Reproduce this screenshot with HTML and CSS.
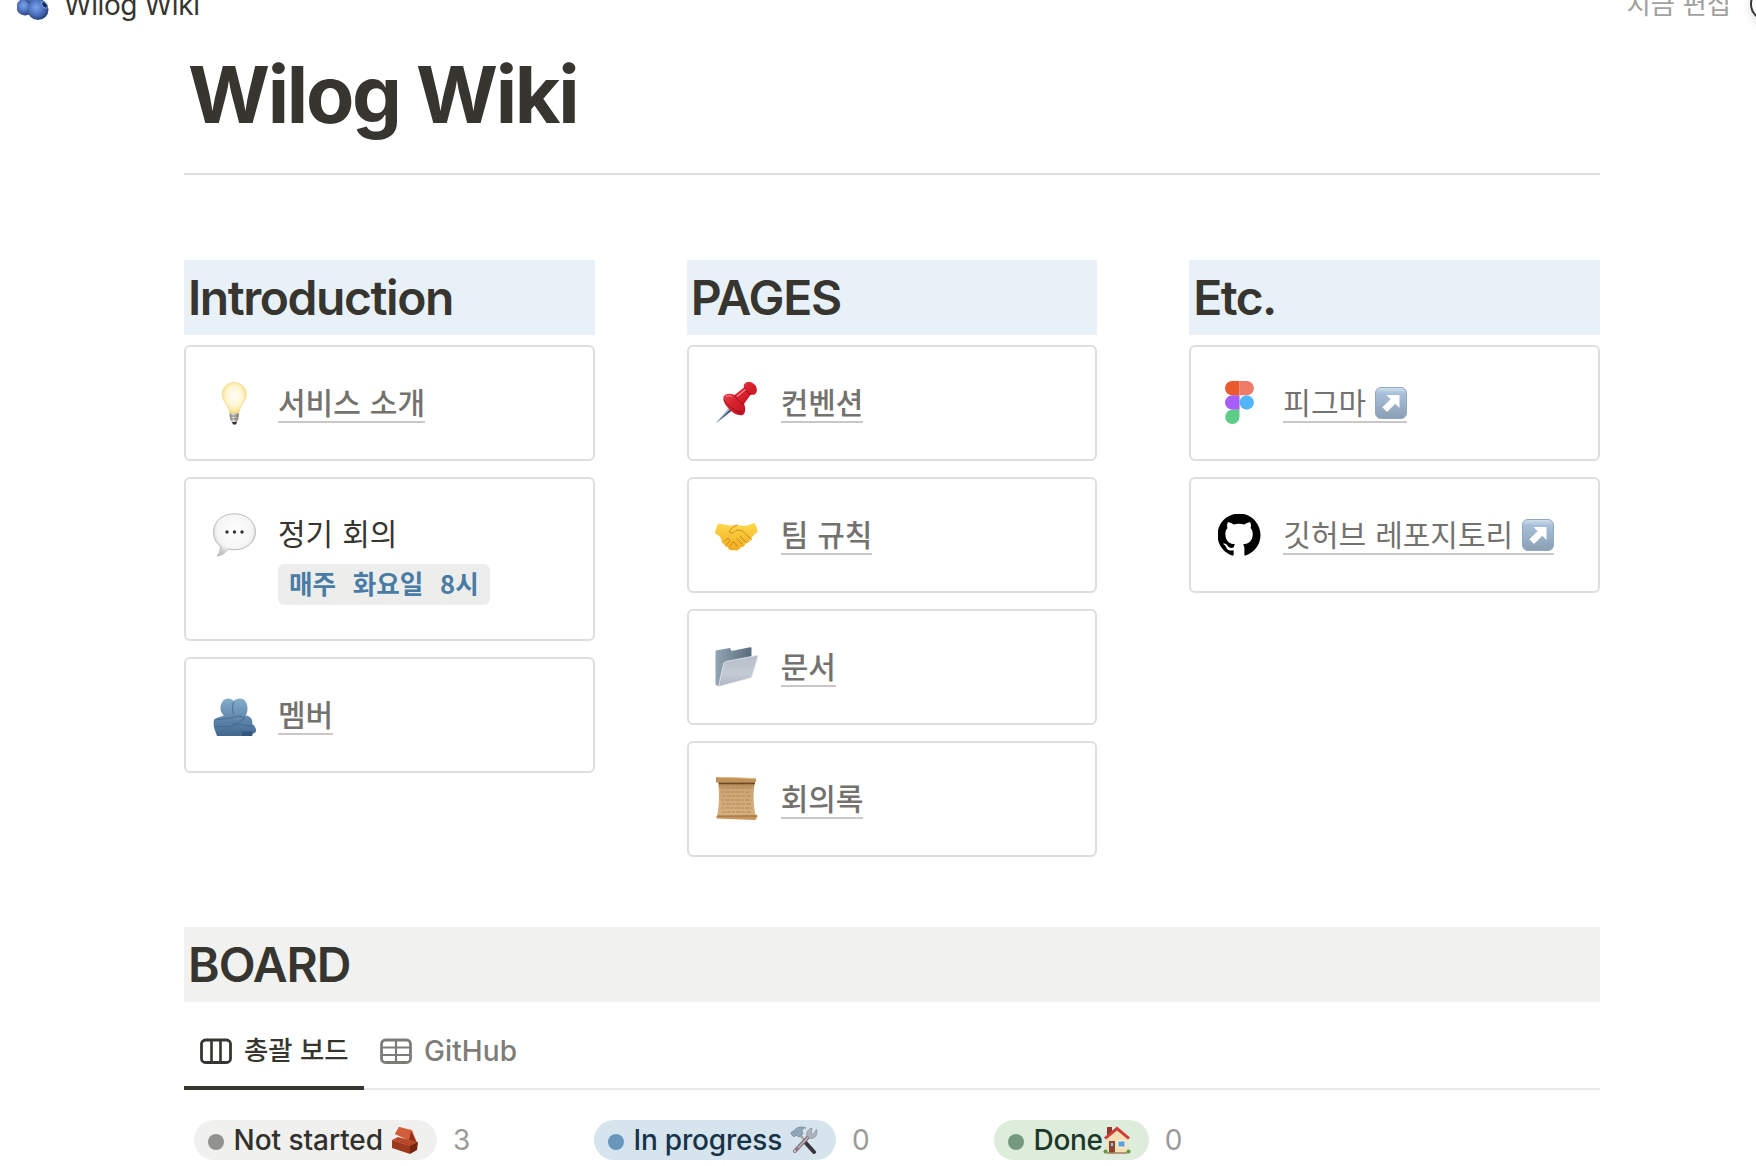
FILE: index.html
```
<!DOCTYPE html>
<html lang="ko">
<head>
<meta charset="utf-8">
<title>Wilog Wiki</title>
<link rel="stylesheet" href="styles.css">
</head>
<body>
<svg class="defs" width="0" height="0" aria-hidden="true">
  <defs>
    <radialGradient id="berry" cx=".42" cy=".4" r=".65"><stop offset="0" stop-color="#7ba3ea"/><stop offset=".55" stop-color="#4d72bd"/><stop offset="1" stop-color="#22376f"/></radialGradient>
    <radialGradient id="glass" cx=".5" cy=".45" r=".55"><stop offset="0" stop-color="#fffef8"/><stop offset=".6" stop-color="#fff6d2"/><stop offset="1" stop-color="#f6dc86"/></radialGradient>
    <linearGradient id="screw" x1="0" x2="1"><stop offset="0" stop-color="#8b8984"/><stop offset=".4" stop-color="#e2e0da"/><stop offset="1" stop-color="#77746e"/></linearGradient>
    <radialGradient id="bubble" cx=".5" cy=".4" r=".6"><stop offset="0" stop-color="#fff"/><stop offset=".7" stop-color="#f5f5f5"/><stop offset="1" stop-color="#c4c4c4"/></radialGradient>
    <linearGradient id="hug" x1="0" y1="0" x2="0" y2="1"><stop offset="0" stop-color="#84aecb"/><stop offset="1" stop-color="#41678f"/></linearGradient>
    <linearGradient id="pin" x1="0" y1="0" x2="1" y2="1"><stop offset="0" stop-color="#f0505a"/><stop offset=".5" stop-color="#d81f2c"/><stop offset="1" stop-color="#a30f1c"/></linearGradient>
    <linearGradient id="hand" x1="0" y1="0" x2="0" y2="1"><stop offset="0" stop-color="#ffd84a"/><stop offset="1" stop-color="#f0ac22"/></linearGradient>
    <linearGradient id="folderBack" x1="0" y1="0" x2="1" y2="0"><stop offset="0" stop-color="#94a5b2"/><stop offset="1" stop-color="#566b7b"/></linearGradient>
    <linearGradient id="folderFront" x1="0" y1="0" x2="0" y2="1"><stop offset="0" stop-color="#b5bdc9"/><stop offset=".6" stop-color="#c5cbd5"/><stop offset="1" stop-color="#aab4c2"/></linearGradient>
    <linearGradient id="paper" x1="0" y1="0" x2="0" y2="1"><stop offset="0" stop-color="#a57b4a"/><stop offset=".25" stop-color="#cda673"/><stop offset="1" stop-color="#d6b07e"/></linearGradient>
    <linearGradient id="key" x1="0" y1="0" x2="0" y2="1"><stop offset="0" stop-color="#d3e1ec"/><stop offset=".2" stop-color="#a6bfd7"/><stop offset="1" stop-color="#8b9fb4"/></linearGradient>
    <symbol id="arrow-key" viewBox="0 0 32 32">
      <rect x=".5" y=".5" width="31" height="31" rx="5.500" fill="url(#key)" stroke="#91a9c0"/>
      <path d="M11.500 8h13v13l-4.200-4.200-8.300 8.200-4.700-4.700 8.300-8.100z" fill="#fff"/>
    </symbol>
  </defs>
</svg>

<header class="topbar">
  <div class="crumb">
    <svg class="crumb-icon" viewBox="0 0 32 32">
      <circle cx="8" cy="18" r="8.500" fill="url(#berry)"/>
      <circle cx="15" cy="7" r="8" fill="url(#berry)"/>
      <circle cx="21" cy="20.500" r="10.500" fill="url(#berry)"/>
      <path d="M24 13l4 0 2.500 3.500-1 3-3.500-1.500z" fill="#1c2b55" stroke="#7ba0e4"/>
    </svg>
    <span class="crumb-text">Wilog Wiki</span>
  </div>
  <div class="edited"><span>지금 편집</span><i class="avatar"></i></div>
</header>

<main class="page">
  <h1 class="title">Wilog Wiki</h1>
  <hr class="rule">

  <div class="columns">
    <section class="column">
      <h2 class="heading blue intro">Introduction</h2>
      <div class="card">
        <svg class="icon" viewBox="0 0 44 44">
          <path d="M17.500 32h9.500l-.8 6.500-2 3.500h-4l-2-3.500z" fill="url(#screw)"/>
          <path d="M17.700 35h8.800M18 38h8" stroke="#73706a" stroke-width=".8"/>
          <path d="M20 41h5l-1 2.500h-3z" fill="#333"/>
          <path d="M22.300 1.500c7 0 12 5 12 12 0 7-6.500 10-7.300 18.500h-9.500c-.8-8.500-7.300-11.500-7.300-18.500 0-7 5-12 12.100-12z" fill="url(#glass)" stroke="#f1d98d" stroke-width=".8"/>
        </svg>
        <div class="label"><a class="link">서비스 소개</a></div>
      </div>
      <div class="card meeting">
        <svg class="icon" viewBox="0 .5 44 44">
          <path d="M22.500 1.300c12 0 21 7.500 21 18s-9 18-21 18c-2.500 0-4.500-.2-6.500-.8-2.500 3.500-6 6.500-11 7 2.500-2.500 3.800-6 3.200-10C4 30.300 1.500 25.500 1.500 19.300c0-10.500 9-18 21-18z" fill="url(#bubble)" stroke="#b4b4b4" stroke-width=".9"/>
          <g fill="#333"><circle cx="15" cy="19.500" r="1.700"/><circle cx="22.500" cy="19.500" r="1.700"/><circle cx="30" cy="19.500" r="1.700"/></g>
        </svg>
        <div class="label"><span class="plain">정기 회의</span><code class="code">매주 화요일 8시</code></div>
      </div>
      <div class="card">
        <svg class="icon" viewBox="0 -2.500 44 44">
          <path d="M8.500 13c0-6 3.500-10 7.500-10 2.500 0 4.500 1 5.700 2.500C23.200 4 25.500 3 28 3c4.500 0 7.500 4 7.500 10 0 3-.8 5.500-1.800 7 5 .8 7.300 4 6.500 8.500 2.500 1.500 4 4.500 3.800 7-.4 1.500-1.500 2.300-3 2.500L40 40.500H5l-2.700-7.500c-1-4-1-8.500.5-9.500 3-2.200 7-2 9-3.500C9.800 17.500 8.500 16 8.500 13z" fill="url(#hug)"/>
          <path d="M3 24.500c8-1.500 15-1 20-3.500 5-1 8 0 10 2-4 1.500-6 6-13 5.500M2.500 31c10-.5 16 2 22-2l16 1.500M22 6c-2 4-2 9 0 13M17 38l4-2.500 4 2.500 4-2" fill="none" stroke="#3d668e" stroke-width=".8"/>
          <path d="M30 36h10v4.500H30z" fill="#31577e"/>
        </svg>
        <div class="label"><a class="link">멤버</a></div>
      </div>
    </section>

    <section class="column">
      <h2 class="heading blue pages">PAGES</h2>
      <div class="card">
        <svg class="icon" viewBox="1 .5 44 44">
          <path d="M1.500 43L17 25l3 3z" fill="#8fb4d4"/><path d="M1.500 43L18.500 27l1.500 1.500z" fill="#3e4854"/>
          <path d="M9.500 16c2-3 7-3.500 11-1.500L30 7c-1-3 1.500-6 5.500-5.500 4.500.5 8 4.500 7.300 9-.5 3.500-3.500 4.500-6 3.500L30 23.500c2 4 1.500 9-1 11-5 1-9.500-1.500-13-5-4-3.500-7.500-8.500-6.500-13.500z" fill="url(#pin)"/>
          <path d="M30.500 7c1.500 3.500 4 6 7 7M20.500 14.500c2 4 5 7.500 9.500 9.500M10 19c4 7 11 12 18 13" fill="none" stroke="#9c101b" stroke-width="1"/>
          <path d="M23 16l8.500-7M12 16c2-1 4-1 6 0" stroke="#f8888c" stroke-width="1.200" fill="none"/>
        </svg>
        <div class="label"><a class="link">컨벤션</a></div>
      </div>
      <div class="card">
        <svg class="icon" viewBox="1 1 44 44">
          <path d="M4.500 11.500l11 2c2 .4 4-.6 6-.6 4 0 8 1.300 12 .6l7-2.500c2 3 3 6 3 9-3 2-5 4-7 8-1 2.500-3 3-5 3.500-1 3-3 4-5 4-1.500 2.500-4 3.500-6.500 2.500-3.500 1-5.500-.5-6.500-3-2 0-3-1-3.500-3-2-.5-2.500-2-2.500-4-1-3.500-3-5-6.500-6.500.4-4 1.500-7.500 3.500-10z" fill="url(#hand)"/>
          <path d="M23 13c-4 1-6 4-8 7 2 2 5 1 7-1.500 3-1 6 0 8 2l7.500 7M26 24l6.500 6.500M23 27l5 5M19 29l4 5M11 29l3-3 2 3-3 3M16 34l3-4" fill="none" stroke="#cf8a15" stroke-width="1" stroke-linecap="round"/>
        </svg>
        <div class="label"><a class="link">팀 규칙</a></div>
      </div>
      <div class="card">
        <svg class="icon" viewBox="1 0 44 44">
          <path d="M1.500 7c0-1 .5-1.500 1.500-1.700L16 3l1.500 3L36 2.300c1-.2 1.500.2 1.500 1V28L4 40.500c-1.500.5-2.500-.5-2.500-2z" fill="url(#folderBack)"/>
          <path d="M9.500 19c.4-1.500 1.500-2.300 3-2.600L42.500 10.500c1-.2 1.500.3 1.300 1.300L38 31c-.3 1.200-1 1.800-2 2L4.500 41.500z" fill="url(#folderFront)" stroke="#e3e8ee" stroke-width=".8"/>
        </svg>
        <div class="label"><a class="link">문서</a></div>
      </div>
      <div class="card">
        <svg class="icon" viewBox="1 1 44 44">
          <path d="M4 5h37c-2 11-2 24 1 36H3C5.500 29 5.500 16 4 5z" fill="url(#paper)"/>
          <path d="M2 1l40 1.500V6L2 6.500z" fill="#c1915b"/><path d="M2 1l40 1.500" stroke="#e4bd8b"/>
          <path d="M5 7.500h36" stroke="#6d4a26" stroke-width="1.500"/>
          <path d="M2.500 40l39-1c1.500-1 2 0 2 1.500l-2 3.500-39-1.500z" fill="#c6955a"/><path d="M3 40h39" stroke="#8b6236" stroke-width=".8"/>
          <path d="M8 12h30M7 16h30M8 20h29M7 24h30M8 28h29M7 32h31M8 36h30" stroke="#b0875a" stroke-width=".9" stroke-dasharray="3 1 5 1"/>
        </svg>
        <div class="label"><a class="link">회의록</a></div>
      </div>
    </section>

    <section class="column">
      <h2 class="heading blue etc">Etc.</h2>
      <div class="card">
        <svg class="icon" viewBox="0 .5 44 44">
          <path d="M22.500.5v14.300h-7.300a7.150 7.150 0 0 1 0-14.300z" fill="#eb5a2c"/>
          <path d="M22.500.5h7.200a7.150 7.150 0 0 1 0 14.300h-7.200z" fill="#ee7b68"/>
          <path d="M22.500 14.800v14.400h-7.300a7.200 7.200 0 0 1 0-14.400z" fill="#a65cf6"/>
          <circle cx="29.700" cy="22" r="7.200" fill="#53b6fb"/>
          <path d="M22.500 29.200v7a7.200 7.200 0 1 1-7.300-7z" fill="#5fcd87"/>
        </svg>
        <div class="label"><a class="link thin">피그마 <svg class="key"><use href="#arrow-key"/></svg></a></div>
      </div>
      <div class="card">
        <svg class="icon gh" viewBox="0 0 16 16">
          <path d="M8 0C3.580 0 0 3.580 0 8c0 3.540 2.290 6.530 5.470 7.590.4.070.55-.17.55-.38 0-.19-.01-.82-.01-1.490-2.010.37-2.530-.49-2.690-.94-.09-.23-.48-.94-.82-1.130-.28-.15-.68-.52-.01-.53.63-.01 1.080.58 1.230.82.72 1.210 1.870.87 2.330.66.070-.52.28-.87.51-1.070-1.780-.2-3.640-.89-3.640-3.950 0-.87.31-1.590.82-2.150-.08-.2-.36-1.020.08-2.120 0 0 .67-.21 2.200.82.64-.18 1.320-.27 2-.27s1.360.09 2 .27c1.530-1.040 2.200-.82 2.200-.82.44 1.100.16 1.920.08 2.120.51.56.82 1.270.82 2.150 0 3.070-1.870 3.750-3.650 3.950.29.25.54.73.54 1.480 0 1.070-.01 1.930-.01 2.200 0 .21.15.46.55.38A8.010 8.010 0 0 0 16 8c0-4.420-3.580-8-8-8z"/>
        </svg>
        <div class="label"><a class="link thin">깃허브 레포지토리 <svg class="key"><use href="#arrow-key"/></svg></a></div>
      </div>
    </section>
  </div>

  <h2 class="heading gray board-title">BOARD</h2>

  <nav class="tabs">
    <div class="tab active">
      <svg class="tab-icon" viewBox="0 0 32 26"><rect x="1.500" y="2" width="29" height="22.500" rx="4" fill="none" stroke="currentColor" stroke-width="2.800"/><path d="M11.500 2v22M20.500 2v22" stroke="currentColor" stroke-width="2.600"/></svg>
      <span class="tab-ko">총괄 보드</span>
    </div>
    <div class="tab">
      <svg class="tab-icon" viewBox="0 0 32 26"><rect x="1.500" y="2" width="29" height="22.500" rx="4" fill="none" stroke="currentColor" stroke-width="2.800"/><path d="M2 9.500h28M2 17h28M16 2v22" stroke="currentColor" stroke-width="2.200"/></svg>
      <span class="tab-en">GitHub</span>
    </div>
  </nav>

  <div class="groups">
    <div class="group">
      <div class="pill todo"><i class="dot"></i><span>Not started</span>
        <svg class="emoji" viewBox="0 0 28 28">
          <path d="M8 1l13 3 5 13-9-3L4 8z" fill="#dc6844"/><path d="M4 8l4-7 12 4-2 9z" fill="#d25d39"/><path d="M20 5l6 12-8-3z" fill="#8f3119"/>
          <path d="M1 14l6-3 20 5-6 5z" fill="#b9482a"/><path d="M1 14l18 6v8L1 22z" fill="#a0381c"/><path d="M19 20l8-4-1 8-7 4z" fill="#742410"/>
        </svg>
      </div>
      <span class="count">3</span>
    </div>
    <div class="group">
      <div class="pill doing"><i class="dot"></i><span>In progress</span>
        <svg class="emoji" viewBox="0 0 28 28">
          <path d="M9 8l7 8" stroke="#a9a7ac" stroke-width="2.500"/><path d="M15 16l9 10" stroke="#39373b" stroke-width="4" stroke-linecap="round"/>
          <path d="M20 9L5 25" stroke="#89747c" stroke-width="4" stroke-linecap="round"/><path d="M20 9L8 22" stroke="#b9b3ba" stroke-width="1.500"/>
          <circle cx="5" cy="25" r="1" fill="#ddd"/>
          <path d="M1 8c0-2 1-3 3-3 2-4 7-5 12-3-3 0-4 1-4 3l1 3-4 3-3-2-2 2z" fill="#8fa6b8" stroke="#63788a" stroke-width=".6"/>
          <path d="M17 10c-1-4 1-7 5-8l-1 5 2 1.500 3.500-5c1.500 5-1 9-6 9z" fill="#aeb2ba" stroke="#7a7f88" stroke-width=".6"/>
        </svg>
      </div>
      <span class="count">0</span>
    </div>
    <div class="group">
      <div class="pill done"><i class="dot"></i><span>Done</span>
        <svg class="emoji" viewBox="0 0 28 28">
          <path d="M4 1h5v9H4z" fill="#8d3a34"/><path d="M4 12l10-9 10 9v15H4z" fill="#f6dfb4"/>
          <path d="M14 .5L1 11.500l2 2L14 4.500l11 9 2-2z" fill="#cf3c3c"/>
          <path d="M6 15h6v12H6z" fill="#874933"/><path d="M8 17h2v3H8z" fill="#9cc6ea"/><path d="M15 15h7v6h-7z" fill="#5aa2e0" stroke="#fff" stroke-width=".8"/>
          <circle cx="2.500" cy="25.500" r="2" fill="#5b9a3c"/><circle cx="25.500" cy="25.500" r="2" fill="#5b9a3c"/><path d="M4 27h20" stroke="#a27c5e" stroke-width="1.500"/>
        </svg>
      </div>
      <span class="count">0</span>
    </div>
  </div>
</main>
</body>
</html>
```
FILE: styles.css
```
* { box-sizing: border-box; }
html, body { height: 100%; }
body {
  margin: 0;
  overflow: hidden;
  background: #fff;
  color: #37352f;
  font-family: Inter, "Noto Sans CJK KR", sans-serif;
}
.defs { position: absolute; }

.topbar {
  display: flex;
  justify-content: space-between;
  height: 40px;
  padding-left: 17px;
  overflow: hidden;
}
.crumb { display: flex; gap: 15px; }
.crumb-icon { width: 32px; height: 32px; margin-top: -11px; }
.crumb-text { font-size: 28px; line-height: 40px; margin-top: -15px; letter-spacing: -0.4px; }
.edited {
  display: flex;
  gap: 19px;
  margin-right: -28px;
  color: #a1a19e;
  font: 26.4px/40px "Noto Sans CJK KR", sans-serif;
}
.edited span { margin-top: -17px; }
.avatar {
  width: 34px;
  height: 34px;
  margin-top: -13px;
  border: 2px solid #37352f;
  border-radius: 50%;
  box-shadow: 0 4px 10px rgba(0, 0, 0, .12);
}

.page { width: 1416px; margin-left: 184px; }
.title {
  height: 133px;
  margin: 0;
  padding-left: 4px;
  font-size: 79px;
  font-weight: 700;
  line-height: 109px;
  letter-spacing: -2.3px;
}
.rule { height: 2px; margin: 0 0 85px; border: 0; background: #dededd; }

.columns { display: grid; grid-template-columns: repeat(3, 1fr); gap: 92px; height: 667px; }
.column { min-width: 0; }
.heading {
  height: 75px;
  margin: 0;
  padding-left: 4px;
  font-size: 48px;
  font-weight: 600;
  line-height: 76px;
  letter-spacing: -1px;
}
.intro { letter-spacing: -1.45px; }
.pages { letter-spacing: -1.2px; }
.etc { letter-spacing: -1.6px; }
.blue { background: #e8f1f7; margin-bottom: 10px; }
.gray { background: #f1f1ef; }

.card {
  display: flex;
  gap: 22px;
  min-height: 116px;
  margin-bottom: 16px;
  padding: 34px 26px;
  border: 2px solid #dededd;
  border-radius: 6px;
}
.meeting { height: 164px; }
.icon { width: 44px; height: 44px; flex: none; }
.gh { padding: 0.5px; }
.label {
  display: flex;
  flex-direction: column;
  align-items: flex-start;
  font: 30px/40px "Noto Sans CJK KR", sans-serif;
  word-spacing: 0.6px;
}
.link {
  height: 42px;
  border-bottom: 2px solid #c9c8c6;
  color: #73726e;
  font-weight: 500;
  white-space: nowrap;
}
.thin { font-weight: 400; }
.key { width: 32px; height: 32px; vertical-align: -5px; }
.plain { height: 52px; line-height: 39px; }
.code {
  height: 42px;
  padding: 0 11px;
  border-radius: 6px;
  background: #ededec;
  color: #487ca5;
  font: 700 25.6px/37px "Noto Sans CJK KR", sans-serif;
  word-spacing: 9.5px;
}

.tabs { display: flex; height: 88px; border-bottom: 2px solid #e9e9e7; }
.tab {
  display: flex;
  align-items: center;
  gap: 12px;
  height: 88px;
  padding: 10px 16px 0;
  color: #7d7c78;
  font-size: 28px;
  font-weight: 500;
}
.active { width: 180px; padding-top: 13px; border-bottom: 4px solid #37352f; color: #37352f; }
.tab-icon { width: 32px; height: 26px; flex: none; }
.tab-ko { font: 500 26.4px/36px "Noto Sans CJK KR", sans-serif; margin-top: -3px; white-space: nowrap; }
.tab-en { letter-spacing: 0.1px; }

.groups { display: flex; padding: 30px 0 0 10px; }
.group { display: flex; align-items: center; gap: 16px; width: 400px; }
.pill {
  display: flex;
  align-items: center;
  height: 40px;
  padding: 0 18px 0 14px;
  border-radius: 20px;
  font-size: 28px;
  font-weight: 500;
  letter-spacing: -0.05px;
  white-space: nowrap;
}
.dot { width: 16px; height: 16px; margin: 3px 9.5px 0 0; border-radius: 50%; }
.emoji { width: 28px; height: 28px; margin-left: 8px; }
.todo { background: #f0f0ef; color: #32302c; }
.todo .dot { background: #91918e; }
.doing { background: #d6e4ee; color: #183347; letter-spacing: -0.2px; }
.doing .dot { background: #6996bc; }
.done { background: #deecdc; color: #1c3829; letter-spacing: -0.3px; }
.done .dot { background: #75997f; }
.done .emoji { margin-left: 0; }
.count { color: #9b9a97; font-size: 28px; }
```
